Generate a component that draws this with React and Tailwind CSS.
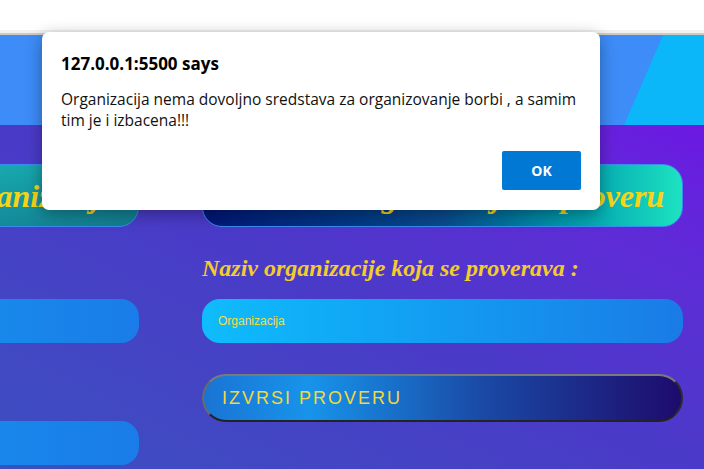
export default function App() {
  return (
    <div className="relative w-[704px] h-[469px] overflow-hidden bg-white" style={{ fontFamily: '"Liberation Sans", Arial, sans-serif' }}>
      <div className="h-[30px] bg-white" />
      <div className="h-[3px] bg-[#f1f1f1]" />
      <div className="h-[2px] bg-[#cfcac0]" />
      <div className="relative h-[90px] bg-[#3d8cf8] overflow-hidden">
        <div className="absolute inset-y-0 right-0 w-[80px] bg-[#0bb6f9] [clip-path:polygon(39px_0,80px_0,80px_100%,0_100%)]" />
      </div>
      <div className="h-[344px] bg-linear-to-bl from-[#6c17e2] via-[#4a3ac8] to-[#3b4fc0] flex pt-[39px]">
        <div className="w-[139px] shrink-0 overflow-hidden flex flex-col">
          <div className="ml-[-121px] w-[260px] h-[63px] rounded-r-[20px] border border-[#3a8af0] bg-linear-to-br from-[#1ab8b8] to-[#127a8e] flex items-center pl-[65px]">
            <span className="text-[32px] font-bold italic text-[#f5d418] whitespace-nowrap" style={{ fontFamily: '"Liberation Serif", serif' }}>Organizacija</span>
          </div>
          <div className="ml-[-121px] w-[260px] h-[44px] mt-[72px] rounded-r-[18px] bg-linear-to-r from-[#1793ee] to-[#1a7ce8]" />
          <div className="ml-[-121px] w-[260px] h-[44px] mt-[78px] rounded-r-[18px] bg-linear-to-r from-[#1790ee] to-[#1a7ce8]" />
        </div>
        <div className="ml-[63px] w-[481px] flex flex-col">
          <div className="h-[63px] rounded-[20px] border border-[#3a8af0] bg-linear-to-r from-[#021577] via-[#0a4a8c] to-[#1de3c1] flex items-center justify-center">
            <span className="text-[32px] font-bold italic text-[#f5d418] whitespace-nowrap" style={{ fontFamily: '"Liberation Serif", serif' }}>Kontrola Organizacija za proveru</span>
          </div>
          <div className="mt-[26px] h-[30px] text-[24px] font-bold italic text-[#f3cd2c] leading-[30px] whitespace-nowrap" style={{ fontFamily: '"Liberation Serif", serif' }}>Naziv organizacije koja se proverava :</div>
          <div className="mt-[16px] h-[44px] rounded-[18px] bg-linear-to-r from-[#0fbcfc] to-[#1a7be6] flex items-center pl-[16px]">
            <span className="text-[12px] text-[#f2dc3c]">Organizacija</span>
          </div>
          <div className="mt-[31px] h-[48px] rounded-full border-2 border-t-[#7a7a7a] border-l-[#6a6a6a] border-b-[#232323] border-r-[#2a2a2a] bg-[linear-gradient(to_right,#1a74d4_0%,#1794ea_22%,#1a4aa6_58%,#1e0b6c_100%)] flex items-center pl-[18px]">
            <span className="text-[18px] tracking-[2px] text-[#f5d83a]">IZVRSI PROVERU</span>
          </div>
        </div>
      </div>

      <div className="absolute left-[42px] top-[32px] w-[558px] h-[178px] bg-white rounded-[7px] shadow-[0_4px_16px_rgba(0,0,0,0.35)] pl-[19px] pr-[17px] pt-[20px]" style={{ fontFamily: '"Open Sans", "Noto Sans", sans-serif' }}>
        <div className="text-[17px] font-bold text-black leading-[24px]">127.0.0.1:5500 says</div>
        <div className="mt-[13px] text-[15.5px] text-[#111] leading-[21px]">Organizacija nema dovoljno sredstava za organizovanje borbi , a samim tim je i izbacena!!!</div>
        <div className="flex justify-end mt-[20px] pr-[2px]">
          <div className="w-[79px] h-[39px] bg-[#0078d4] rounded-[2px] flex items-center justify-center text-white text-[14px] font-bold">OK</div>
        </div>
      </div>
    </div>
  );
}
